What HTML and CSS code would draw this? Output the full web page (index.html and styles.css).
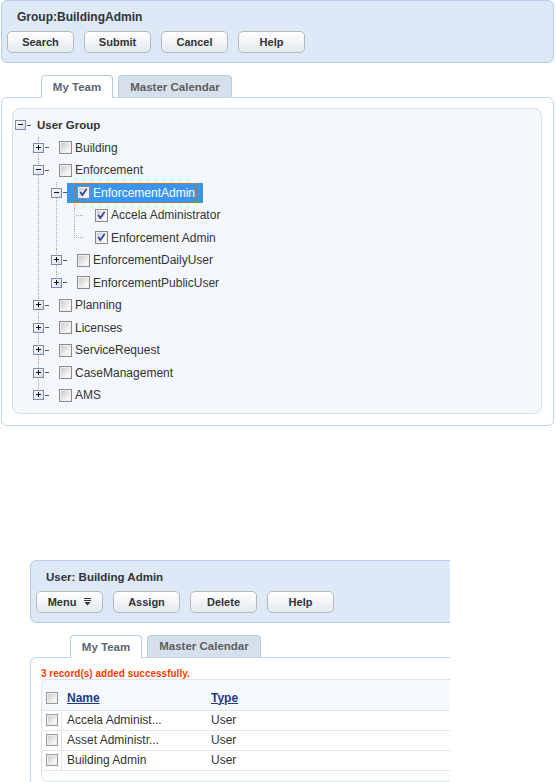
FILE: index.html
```html
<!doctype html>
<html>
<head>
<meta charset="utf-8">
<meta name="viewport" content="width=device-width, initial-scale=1.0">
<link rel="stylesheet" href="styles.css">
<title>Group:BuildingAdmin</title>
</head>
<body>
<svg class="defs" width="0" height="0" aria-hidden="true">
  <defs>
    <linearGradient id="boxfill" x1="0" y1="0" x2="1" y2="1">
      <stop offset="0" stop-color="#ffffff"/>
      <stop offset="1" stop-color="#d5dcea"/>
    </linearGradient>
    <symbol id="plus" viewBox="0 0 11 10">
      <rect x="0.5" y="0.5" width="10" height="9" fill="url(#boxfill)" stroke="#7b8cb0"/>
      <rect x="3" y="4" width="5" height="1" fill="#111"/>
      <rect x="5" y="2" width="1" height="5" fill="#111"/>
    </symbol>
    <symbol id="minus" viewBox="0 0 11 10">
      <rect x="0.5" y="0.5" width="10" height="9" fill="url(#boxfill)" stroke="#7b8cb0"/>
      <rect x="3" y="4" width="5" height="1" fill="#111"/>
    </symbol>
    <symbol id="tick" viewBox="0 0 13 13">
      <path d="M2.6 6 L5.2 9.4 L10.2 2.2" fill="none" stroke="#2a3f99" stroke-width="2"/>
    </symbol>
  </defs>
</svg>

<div class="shot">
  <div class="header">
    <h2>Group:BuildingAdmin</h2>
    <div class="buttons">
      <button class="btn">Search</button>
      <button class="btn">Submit</button>
      <button class="btn">Cancel</button>
      <button class="btn">Help</button>
    </div>
  </div>

  <div class="tabs">
    <div class="tab tab-my active">My Team</div>
    <div class="tab tab-cal">Master Calendar</div>
  </div>

  <div class="panel tree-panel">
    <div class="tree-box">
      <ul class="tree">
        <li>
          <div class="row"><svg class="exp"><use href="#minus"/></svg><span class="dash"></span><span class="item root">User Group</span></div>
          <ul>
            <li>
              <div class="row"><svg class="exp"><use href="#plus"/></svg><span class="dash"></span><span class="item"><span class="focus"><span class="cb"></span><span class="label">Building</span></span></span></div>
            </li>
            <li>
              <div class="row"><svg class="exp"><use href="#minus"/></svg><span class="dash"></span><span class="item"><span class="focus"><span class="cb"></span><span class="label">Enforcement</span></span></span></div>
              <ul>
                <li>
                  <div class="row"><svg class="exp"><use href="#minus"/></svg><span class="dash"></span><span class="item selected"><span class="focus"><span class="cb"><svg><use href="#tick"/></svg></span><span class="label">EnforcementAdmin</span></span></span></div>
                  <ul>
                    <li>
                      <div class="row"><span class="leaf"></span><span class="item"><span class="focus"><span class="cb"><svg><use href="#tick"/></svg></span><span class="label">Accela Administrator</span></span></span></div>
                    </li>
                    <li>
                      <div class="row"><span class="leaf"></span><span class="item"><span class="focus"><span class="cb"><svg><use href="#tick"/></svg></span><span class="label">Enforcement Admin</span></span></span></div>
                    </li>
                  </ul>
                </li>
                <li>
                  <div class="row"><svg class="exp"><use href="#plus"/></svg><span class="dash"></span><span class="item"><span class="focus"><span class="cb"></span><span class="label">EnforcementDailyUser</span></span></span></div>
                </li>
                <li>
                  <div class="row"><svg class="exp"><use href="#plus"/></svg><span class="dash"></span><span class="item"><span class="focus"><span class="cb"></span><span class="label">EnforcementPublicUser</span></span></span></div>
                </li>
              </ul>
            </li>
            <li>
              <div class="row"><svg class="exp"><use href="#plus"/></svg><span class="dash"></span><span class="item"><span class="focus"><span class="cb"></span><span class="label">Planning</span></span></span></div>
            </li>
            <li>
              <div class="row"><svg class="exp"><use href="#plus"/></svg><span class="dash"></span><span class="item"><span class="focus"><span class="cb"></span><span class="label">Licenses</span></span></span></div>
            </li>
            <li>
              <div class="row"><svg class="exp"><use href="#plus"/></svg><span class="dash"></span><span class="item"><span class="focus"><span class="cb"></span><span class="label">ServiceRequest</span></span></span></div>
            </li>
            <li>
              <div class="row"><svg class="exp"><use href="#plus"/></svg><span class="dash"></span><span class="item"><span class="focus"><span class="cb"></span><span class="label">CaseManagement</span></span></span></div>
            </li>
            <li>
              <div class="row"><svg class="exp"><use href="#plus"/></svg><span class="dash"></span><span class="item"><span class="focus"><span class="cb"></span><span class="label">AMS</span></span></span></div>
            </li>
          </ul>
        </li>
      </ul>
    </div>
  </div>
</div>

<div class="shot-user">
  <div class="inner">
    <div class="header">
      <h2>User: Building Admin</h2>
      <div class="buttons">
        <button class="btn">Menu <svg class="menu-icon" width="7" height="8" viewBox="0 0 7 8"><rect x="0" y="0" width="7" height="1" fill="#333"/><rect x="0" y="2" width="7" height="1" fill="#333"/><path d="M0.5 4 H6.5 L3.5 7.5 Z" fill="#333"/></svg></button>
        <button class="btn">Assign</button>
        <button class="btn">Delete</button>
        <button class="btn">Help</button>
      </div>
    </div>

    <div class="tabs">
      <div class="tab tab-my active">My Team</div>
      <div class="tab tab-cal">Master Calendar</div>
    </div>

    <div class="panel list-panel">
      <div class="msg">3 record(s) added successfully.</div>
      <div class="grid">
        <div class="grid-head">
          <span class="cell-cb"><span class="cb sm"></span></span>
          <a class="col-link" href="#">Name</a>
          <a class="col-link" href="#">Type</a>
        </div>
        <div class="grid-row">
          <span class="cell-cb"><span class="cb sm"></span></span>
          <span class="cell-name">Accela Administ...</span>
          <span>User</span>
        </div>
        <div class="grid-row">
          <span class="cell-cb"><span class="cb sm"></span></span>
          <span class="cell-name">Asset Administr...</span>
          <span>User</span>
        </div>
        <div class="grid-row">
          <span class="cell-cb"><span class="cb sm"></span></span>
          <span class="cell-name">Building Admin</span>
          <span>User</span>
        </div>
        <div class="grid-foot"></div>
      </div>
    </div>
  </div>
</div>
</body>
</html>
```

FILE: styles.css
```css
body {
    margin: 0;
    font-family: "Liberation Sans", Arial, sans-serif;
    font-size: 12px;
    color: #333;
    background-color: white;
}
.defs {
    display: block;
    width: 0;
    height: 0;
}
ul {
    list-style: none;
    margin: 0;
    padding: 0;
}

/* page blocks */
.shot {
    width: 553px;
    margin-left: 1px;
}
.shot-user {
    width: 420px;
    height: 222px;
    margin: 134px 0 0 30px;
    overflow: hidden;
}
.shot-user .inner {
    width: 553px;
}

/* header bar */
.header {
    box-sizing: border-box;
    height: 63px;
    padding: 8px 0 0 5px;
    border: 1px solid #b6cce8;
    border-radius: 6px;
    background-color: #dde9f6;
}
.header h2 {
    margin: 0;
    padding-left: 10px;
    font-size: 12px;
    line-height: 16px;
    color: #333;
}
.shot-user .header h2 {
    font-size: 11.5px;
}
.buttons {
    display: flex;
    gap: 10px;
    margin-top: 6px;
}
.btn {
    box-sizing: border-box;
    width: 67px;
    height: 22px;
    padding: 0;
    border: 1px solid #b9b9b9;
    border-radius: 5px;
    background: linear-gradient(#ffffff, #e2e9f2);
    font-family: "Liberation Sans", Arial, sans-serif;
    font-size: 11px;
    font-weight: bold;
    color: #333;
    display: flex;
    align-items: center;
    justify-content: center;
    gap: 8px;
}
.menu-icon {
    display: block;
}

/* tabs */
.tabs {
    position: relative;
    z-index: 1;
    display: flex;
    gap: 5px;
    height: 22px;
    margin-top: 12px;
    padding-left: 40px;
}
.tab {
    box-sizing: border-box;
    height: 22px;
    border: 1px solid #b9cde6;
    border-bottom: 0;
    border-radius: 4px 4px 0 0;
    background-color: #d6e0ec;
    font-size: 11.5px;
    font-weight: bold;
    color: #5e5e5e;
    display: flex;
    align-items: center;
    justify-content: center;
}
.tab.active {
    height: 23px;
    background-color: #fff;
    color: #5d6670;
}
.tab-my {
    width: 72px;
}
.tab-cal {
    width: 114px;
}
.panel {
    border: 1px solid #c3d6ec;
    border-radius: 6px;
}

/* tree */
.tree-panel {
    padding: 10px 11px 11px 10px;
}
.tree-box {
    padding: 5px 0 6px 2px;
    border: 1px solid #d3e2f1;
    border-radius: 8px;
    background-color: #f4f8fc;
}
.tree ul {
    padding-left: 18px;
}
.tree ul > li {
    position: relative;
}
.tree ul > li::before {
    content: "";
    position: absolute;
    left: 5px;
    top: 0;
    bottom: 0;
    border-left: 1px dotted #a8a8a8;
}
.tree ul > li:last-child::before {
    bottom: auto;
    height: 11px;
}
.row {
    display: flex;
    align-items: center;
    height: 22.5px;
    white-space: nowrap;
}
.exp {
    position: relative;
    display: block;
    width: 11px;
    height: 10px;
    flex: none;
}
.dash {
    width: 4px;
    height: 1px;
    margin-left: 1px;
    background-color: #555;
    flex: none;
}
.leaf {
    width: 7px;
    margin: 0 2px 0 7px;
    border-top: 1px dotted #a8a8a8;
    flex: none;
}
.item {
    display: flex;
    align-items: center;
    height: 20px;
    padding: 0 6px 0 7px;
    color: #333;
}
.item.root {
    padding-left: 6px;
    font-size: 11.5px;
    font-weight: bold;
}
.focus {
    display: flex;
    align-items: center;
    height: 18px;
    padding: 0 1px 0 2px;
    border: 1px dotted transparent;
}
.item.selected {
    background-color: #3a95f0;
    color: #fff;
}
.item.selected .focus {
    border-color: #c9702c;
}
.label {
    margin-left: 3px;
}
.cb {
    box-sizing: border-box;
    display: block;
    width: 13px;
    height: 13px;
    border: 1px solid #8a8a8a;
    background: linear-gradient(135deg, #c6c6c6, #f6f6f6 75%, #ffffff);
    box-shadow: inset 0 0 0 1px #efefef;
    flex: none;
}
.cb svg {
    display: block;
    width: 11px;
    height: 11px;
}
.cb.sm {
    width: 12px;
    height: 12px;
    border-color: #999;
}

/* record list */
.list-panel {
    height: 200px;
    padding: 10px 0 0 10px;
    border-right: 0;
    border-bottom: 0;
    border-radius: 6px 0 0 0;
}
.msg {
    font-size: 10px;
    font-weight: bold;
    line-height: 11px;
    color: #ff3c00;
}
.grid {
    width: 520px;
    border: 1px solid #dde3ef;
    border-radius: 6px;
}
.grid-head,
.grid-row {
    box-sizing: border-box;
    display: grid;
    grid-template-columns: 20px 149px 1fr;
    align-items: center;
}
.grid-head {
    height: 31px;
    padding-top: 6px;
    background-color: #f5f9fd;
    border-bottom: 1px solid #dde3ef;
    border-radius: 6px 6px 0 0;
}
.grid-row {
    height: 20px;
    border-bottom: 1px solid #e6e6e6;
}
.cell-cb {
    box-sizing: border-box;
    padding-left: 4px;
    align-self: stretch;
    display: flex;
    align-items: center;
}
.grid-row .cell-cb {
    border-right: 1px solid #e3e3e3;
}
.col-link {
    padding-left: 5px;
    font-weight: bold;
    color: #1b3a8c;
    text-decoration: underline;
}
.col-link + .col-link {
    padding-left: 0;
}
.cell-name {
    padding-left: 5px;
}
.grid-foot {
    height: 10px;
}
```
